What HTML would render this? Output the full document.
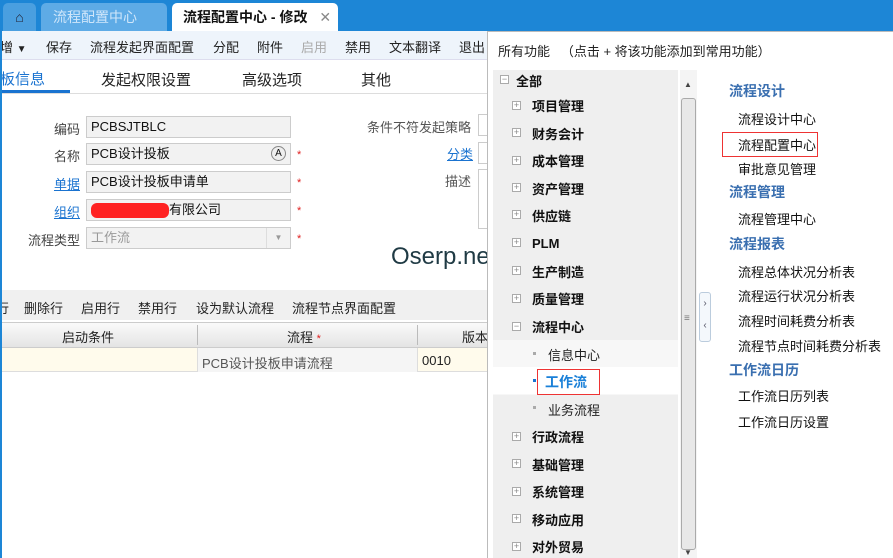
<!DOCTYPE html><html><head><meta charset="utf-8"><style>
*{margin:0;padding:0;box-sizing:border-box}
body{width:893px;height:558px;overflow:hidden;position:relative;background:#fff;font-family:"Liberation Sans","Noto Sans CJK SC",sans-serif;font-size:13px;color:#222}
.a{position:absolute;white-space:nowrap}
.top{left:0;top:0;width:893px;height:31px;background:#1d86d6}
.tab{top:3px;height:28px;border-radius:5px 5px 0 0;line-height:28px;font-size:14px}
.inp{border:1px solid #ccc;background:#f2f2f2;height:22px;line-height:20px;padding-left:4px;font-size:13px;color:#111}
.lbl{text-align:right;width:80px;font-size:13px;color:#444}
.lnk{color:#1a73d0;text-decoration:underline}
.star{color:#e02020;font-size:11px}
.tr{font-weight:bold;font-size:13px;color:#111}
.pl{width:9px;height:9px;border:1px solid #aaa;background:#fff;font-size:9px;line-height:7px;text-align:center;color:#888;font-weight:normal}
.rh{color:#3a6fb0;font-weight:bold;font-size:14px}
.ri{font-size:13px;color:#111}
.tb{top:37px}
.gb{top:298px}
</style></head><body>
<div class="a top"></div>
<div class="a tab" style="left:3px;width:33px;background:#4a9fe0;text-align:center;color:#223">&#8962;</div>
<div class="a tab" style="left:41px;width:126px;background:#5eabe6;color:#cfe6fa;padding-left:12px">流程配置中心</div>
<div class="a tab" style="left:172px;width:166px;background:#fff;color:#111;padding-left:11px;font-weight:bold">流程配置中心 - 修改 <span style="color:#888;margin-left:8px;font-weight:normal">✕</span></div>
<div class="a" style="left:0;top:31px;width:487px;height:29px;background:#eef4fb;border-bottom:1px solid #dde"></div>
<div class="a tb" style="left:0">增 <span style="font-size:10px">▼</span></div>
<div class="a tb" style="left:46px">保存</div>
<div class="a tb" style="left:90px">流程发起界面配置</div>
<div class="a tb" style="left:213px">分配</div>
<div class="a tb" style="left:257px">附件</div>
<div class="a tb" style="left:301px;color:#aaa">启用</div>
<div class="a tb" style="left:345px">禁用</div>
<div class="a tb" style="left:389px">文本翻译</div>
<div class="a tb" style="left:459px">退出</div>
<div class="a" style="left:0;top:68px;font-size:15px;color:#1a73d0">板信息</div>
<div class="a" style="left:0;top:90px;width:70px;height:3px;background:#1a73d0"></div>
<div class="a" style="left:0;top:93px;width:487px;height:1px;background:#ddd"></div>
<div class="a" style="left:101px;top:69px;font-size:15px">发起权限设置</div>
<div class="a" style="left:242px;top:69px;font-size:15px">高级选项</div>
<div class="a" style="left:361px;top:69px;font-size:15px">其他</div>
<div class="a lbl" style="left:0;top:119px">编码</div><div class="a inp" style="left:86px;top:116px;width:205px">PCBSJTBLC</div>
<div class="a lbl" style="left:0;top:146px">名称</div><div class="a inp" style="left:86px;top:143px;width:205px">PCB设计投板<span style="position:absolute;right:4px;top:2px;width:15px;height:15px;border:1px solid #888;border-radius:50%;font-size:10px;line-height:13px;text-align:center;background:#eee">A</span></div><div class="a star" style="left:297px;top:149px">*</div>
<div class="a lbl" style="left:0;top:174px"><span class="lnk">单据</span></div><div class="a inp" style="left:86px;top:171px;width:205px">PCB设计投板申请单</div><div class="a star" style="left:297px;top:177px">*</div>
<div class="a lbl" style="left:0;top:202px"><span class="lnk">组织</span></div><div class="a inp" style="left:86px;top:199px;width:205px"><span style="display:inline-block;width:78px;height:15px;background:#f22;border-radius:6px;vertical-align:middle"></span>有限公司</div><div class="a star" style="left:297px;top:205px">*</div>
<div class="a lbl" style="left:0;top:230px">流程类型</div><div class="a inp" style="left:86px;top:227px;width:205px;color:#999">工作流<span style="position:absolute;right:0;top:0;width:24px;height:20px;border-left:1px solid #ddd;font-size:8px;text-align:center;color:#999">▼</span></div><div class="a star" style="left:297px;top:233px">*</div>
<div class="a" style="left:367px;top:117px;color:#555">条件不符发起策略</div><div class="a" style="left:478px;top:114px;width:12px;height:22px;border:1px solid #ccc"></div>
<div class="a lnk" style="left:447px;top:144px">分类</div><div class="a" style="left:478px;top:142px;width:12px;height:22px;border:1px solid #ccc"></div>
<div class="a" style="left:445px;top:171px;color:#555">描述</div><div class="a" style="left:478px;top:169px;width:12px;height:60px;border:1px solid #ccc"></div>
<div class="a" style="left:391px;top:243px;font-size:24px;color:#1f3a44">Oserp.net</div>
<div class="a" style="left:0;top:290px;width:487px;height:30px;background:#f0f0f0"></div>
<div class="a gb" style="left:-4px">行</div>
<div class="a gb" style="left:24px">删除行</div>
<div class="a gb" style="left:81px">启用行</div>
<div class="a gb" style="left:138px">禁用行</div>
<div class="a gb" style="left:196px">设为默认流程</div>
<div class="a gb" style="left:292px">流程节点界面配置</div>
<div class="a" style="left:0;top:322px;width:487px;height:26px;background:linear-gradient(#fafafa,#e4e4e4);border-top:1px solid #ccc;border-bottom:1px solid #ccc"></div>
<div class="a" style="left:62px;top:327px">启动条件</div><div class="a" style="left:197px;top:325px;width:1px;height:20px;background:#bbb"></div>
<div class="a" style="left:287px;top:327px">流程 <span class="star">*</span></div><div class="a" style="left:417px;top:325px;width:1px;height:20px;background:#bbb"></div>
<div class="a" style="left:462px;top:327px">版本</div>
<div class="a" style="left:0;top:348px;width:487px;height:24px;background:#fffbec;border-bottom:1px solid #ddd"></div>
<div class="a" style="left:197px;top:348px;width:221px;height:24px;background:#f5f5f5;border-left:1px solid #ddd;border-right:1px solid #ddd"></div>
<div class="a" style="left:202px;top:353px;color:#555">PCB设计投板申请流程</div>
<div class="a" style="left:422px;top:353px">0010</div>
<div class="a" style="left:0;top:31px;width:2px;height:527px;background:#1d86d6"></div>
<!-- popup -->
<div class="a" style="left:487px;top:31px;width:406px;height:527px;background:#fff;border-left:1px solid #bbb;border-top:1px solid #bbb"></div>
<div class="a" style="left:498px;top:41px">所有功能 &nbsp;&nbsp;（点击 + 将该功能添加到常用功能）</div>
<div class="a" style="left:493px;top:70px;width:185px;height:488px;background:#efefef"></div>
<div class="a" style="left:493px;top:340px;width:185px;height:55px;background:#f7f7f7"></div>
<div class="a" style="left:493px;top:367px;width:185px;height:27px;background:#fff"></div>
<div class="a" style="left:680px;top:70px;width:17px;height:488px;background:#f4f4f4"></div>
<div class="a" style="left:681px;top:98px;width:15px;height:452px;background:#e8e8e8;border:1px solid #aaa;border-radius:3px"></div>
<div class="a" style="left:684px;top:80px;font-size:8px;color:#444">▲</div>
<div class="a" style="left:684px;top:313px;font-size:10px;color:#777">≡</div>
<div class="a" style="left:684px;top:548px;font-size:8px;color:#444">▼</div>
<div class="a" style="left:699px;top:292px;width:12px;height:50px;border:1px solid #bcd;border-radius:3px;background:#f4f8fc;font-size:10px;color:#556;text-align:center;line-height:22px">›<br>‹</div>
<div class="a pl" style="left:500px;top:75px">−</div><div class="a tr" style="left:516px;top:71px">全部</div>
<div class="a" style="left:512px;top:0">
<div class="a pl" style="top:101px">+</div><div class="a tr" style="left:20px;top:96px">项目管理</div>
<div class="a pl" style="top:128px">+</div><div class="a tr" style="left:20px;top:124px">财务会计</div>
<div class="a pl" style="top:156px">+</div><div class="a tr" style="left:20px;top:151px">成本管理</div>
<div class="a pl" style="top:183px">+</div><div class="a tr" style="left:20px;top:179px">资产管理</div>
<div class="a pl" style="top:210px">+</div><div class="a tr" style="left:20px;top:206px">供应链</div>
<div class="a pl" style="top:238px">+</div><div class="a tr" style="left:20px;top:236px">PLM</div>
<div class="a pl" style="top:266px">+</div><div class="a tr" style="left:20px;top:262px">生产制造</div>
<div class="a pl" style="top:294px">+</div><div class="a tr" style="left:20px;top:289px">质量管理</div>
<div class="a pl" style="top:322px">−</div><div class="a tr" style="left:20px;top:317px">流程中心</div>
<div class="a pl" style="top:432px">+</div><div class="a tr" style="left:20px;top:427px">行政流程</div>
<div class="a pl" style="top:459px">+</div><div class="a tr" style="left:20px;top:455px">基础管理</div>
<div class="a pl" style="top:487px">+</div><div class="a tr" style="left:20px;top:482px">系统管理</div>
<div class="a pl" style="top:514px">+</div><div class="a tr" style="left:20px;top:510px">移动应用</div>
<div class="a pl" style="top:542px">+</div><div class="a tr" style="left:20px;top:537px">对外贸易</div>
</div>
<div class="a" style="left:533px;top:352px;width:3px;height:3px;background:#aaa"></div><div class="a" style="left:548px;top:345px">信息中心</div>
<div class="a" style="left:533px;top:379px;width:3px;height:3px;background:#1a73d0"></div>
<div class="a" style="left:537px;top:369px;width:63px;height:26px;border:1px solid #e33"></div>
<div class="a" style="left:545px;top:372px;font-weight:bold;color:#1a80d8;font-size:14px">工作流</div>
<div class="a" style="left:533px;top:406px;width:3px;height:3px;background:#aaa"></div><div class="a" style="left:548px;top:400px">业务流程</div>
<div class="a rh" style="left:729px;top:81px">流程设计</div>
<div class="a ri" style="left:738px;top:109px">流程设计中心</div>
<div class="a" style="left:722px;top:132px;width:96px;height:25px;border:1px solid #e33"></div>
<div class="a ri" style="left:738px;top:135px">流程配置中心</div>
<div class="a ri" style="left:738px;top:159px">审批意见管理</div>
<div class="a rh" style="left:729px;top:182px">流程管理</div>
<div class="a ri" style="left:738px;top:209px">流程管理中心</div>
<div class="a rh" style="left:729px;top:234px">流程报表</div>
<div class="a ri" style="left:738px;top:262px">流程总体状况分析表</div>
<div class="a ri" style="left:738px;top:286px">流程运行状况分析表</div>
<div class="a ri" style="left:738px;top:311px">流程时间耗费分析表</div>
<div class="a ri" style="left:738px;top:336px">流程节点时间耗费分析表</div>
<div class="a rh" style="left:729px;top:360px">工作流日历</div>
<div class="a ri" style="left:738px;top:386px">工作流日历列表</div>
<div class="a ri" style="left:738px;top:412px">工作流日历设置</div>
</body></html>
